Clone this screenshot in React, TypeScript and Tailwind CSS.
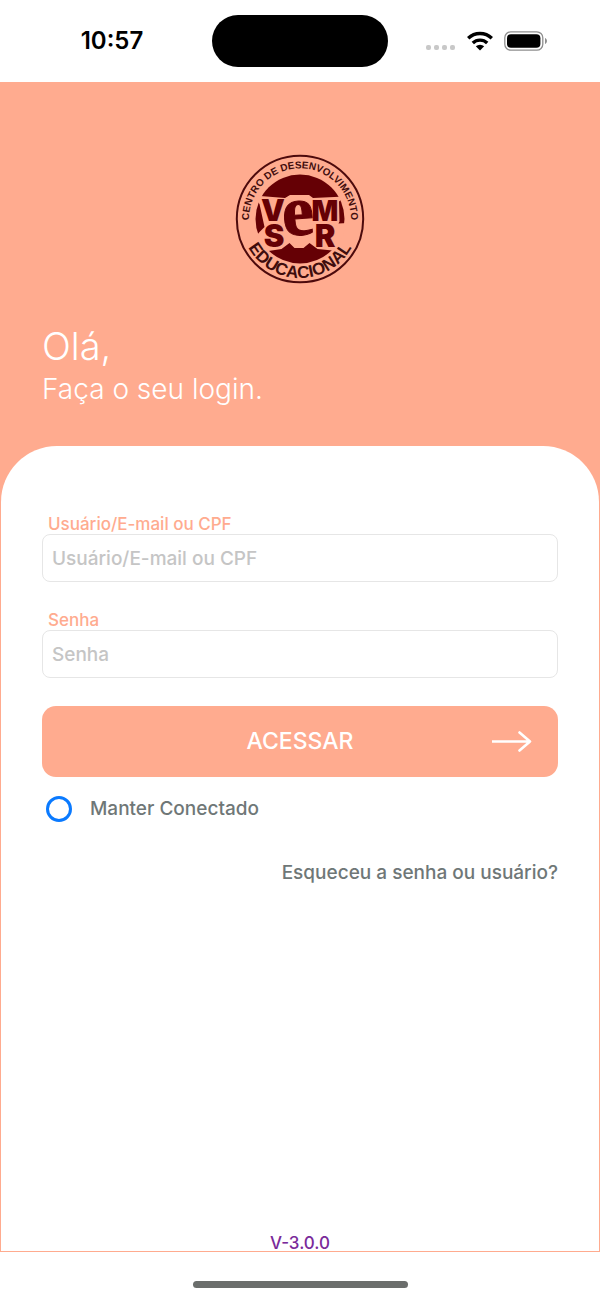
import React, { useState } from "react";

const Wifi: React.FC<{}> = () => (
  <svg width="28" height="20" viewBox="0 0 28 20" fill="none" aria-hidden="true">
    <path
      d="M2.2 7.2a17 17 0 0 1 23.6 0M6.8 12a10.4 10.4 0 0 1 14.4 0"
      stroke="#000"
      strokeWidth="3.4"
    />
    <path d="M14 19.6l-4.2-4.3a6.2 6.2 0 0 1 8.4 0z" fill="#000" />
  </svg>
);

const Battery: React.FC<{}> = () => (
  <svg width="44" height="20" viewBox="0 0 44 20" fill="none" aria-hidden="true">
    <rect x="0.8" y="0.8" width="38" height="18.4" rx="6" stroke="#8e8e8e" strokeWidth="1.3" />
    <rect x="3" y="3.2" width="33.4" height="13.6" rx="4" fill="#000" />
    <path d="M41 7v6c2.6-.8 2.6-5.2 0-6z" fill="#8e8e8e" />
  </svg>
);

const StatusBar: React.FC<{}> = () => (
  <div className="grid h-[82px] grid-cols-[1fr_176px_1fr] items-center bg-white">
    <span className="pl-3 text-center text-2xl font-semibold text-black">
      10:57
    </span>
    <div className="h-[52px] rounded-full bg-black" />
    <div className="flex items-center pl-[38px]">
      <div className="flex gap-[3px] pr-[11px] pt-3">
        {[0, 1, 2, 3].map((dot) => (
          <span key={dot} className="h-[5px] w-[5px] rounded-[2px] bg-[#c8c8c8]" />
        ))}
      </div>
      <Wifi />
      <div className="w-[10px]" />
      <Battery />
    </div>
  </div>
);

const Logo: React.FC<{}> = () => (
  <svg
    className="mx-auto"
    width="130"
    height="130"
    viewBox="0 0 130 130"
    role="img"
    aria-label="Vem Ser Educacional"
  >
    <defs>
      <path id="arc-top" d="M15.6 78A51 51 0 1 1 114.4 78" />
      <path id="arc-bottom" d="M6 65A59 59 0 0 0 124 65" />
    </defs>
    <circle cx="65" cy="65" r="63.2" fill="none" stroke="#4d0a0c" strokeWidth="2" />
    <circle cx="65" cy="65" r="44.5" fill="#650005" />
    <path
      d="M18 41.5l32 2.5 5-3h19l4 3 32-1.5-6 5 .5 20-1 2 9-.5-10 28-20-2-8-6-6 5-9 0-5-5-8 6-13 2-11 2 4-8-4-5-5 1 7-9 5-5-5-23z"
      fill="#ffab8f"
    />
    <g fill="#3f0d0d" fontFamily="Liberation Sans, sans-serif" fontWeight="700" textAnchor="middle">
      <text fontSize="10">
        <textPath href="#arc-top" startOffset="50%">
          CENTRO DE DESENVOLVIMENTO
        </textPath>
      </text>
      <text fontSize="17">
        <textPath href="#arc-bottom" startOffset="50%">
          EDUCACIONAL
        </textPath>
      </text>
    </g>
    <g
      fill="#650005"
      fontFamily="Inter, sans-serif"
      fontWeight="900"
      textAnchor="middle"
    >
      <text x="38" y="67" fontSize="30">V</text>
      <text x="90" y="67" fontSize="28">M</text>
      <text x="39" y="93" fontSize="31">S</text>
      <text x="90" y="93" fontSize="31">R</text>
      <text
        x="63"
        y="81"
        fontSize="72"
        fontFamily="Liberation Serif, serif"
        fontWeight="700"
        stroke="#650005"
        strokeWidth="1"
        transform="rotate(-4 63 65)"
      >
        e
      </text>
    </g>
  </svg>
);

const Field: React.FC<{ id: string; label: string; type: string }> = ({
  id,
  label,
  type,
}) => (
  <div>
    <label
      htmlFor={id}
      className="block pl-[6px] text-[17px] leading-5 font-medium text-[#ffab8f]"
    >
      {label}
    </label>
    <input
      id={id}
      type={type}
      placeholder={label}
      className="block h-12 w-full rounded-lg border border-[#e6e6e6] bg-white px-[9px] text-[19px] font-medium text-[#6f7777] placeholder:text-[#c5c5c5] focus:outline-none"
    />
  </div>
);

const App: React.FC<{}> = () => {
  const [keep, setKeep] = useState(false);
  return (
    <div className="flex min-h-screen flex-col bg-white font-['Inter',sans-serif]">
      <StatusBar />
      <main className="flex flex-1 flex-col bg-[#ffab8f]">
        <header className="px-[42px] pt-[72px] pb-[38px] text-white">
          <Logo />
          <h1 className="mt-[38px] text-[38px] leading-[48px] font-light">Olá,</h1>
          <p className="text-[28px] leading-[38px] font-light">Faça o seu login.</p>
        </header>
        <form
          className="mx-px mb-px flex flex-1 flex-col rounded-t-[56px] bg-white px-[41px] pt-[68px]"
          onSubmit={(e) => e.preventDefault()}
        >
          <div className="flex flex-col gap-7">
            <Field id="user" label="Usuário/E-mail ou CPF" type="text" />
            <Field id="password" label="Senha" type="password" />
            <button
              type="submit"
              className="grid h-[71px] grid-cols-[1fr_auto_1fr] items-center rounded-[14px] bg-[#ffab8f] px-[26px] text-[23px] font-medium text-white"
            >
              <span className="col-start-2">ACESSAR</span>
              <svg
                className="justify-self-end"
                width="40"
                height="22"
                viewBox="0 0 40 22"
                fill="none"
                stroke="currentColor"
                strokeWidth="2.6"
                strokeLinecap="round"
                strokeLinejoin="round"
                aria-hidden="true"
              >
                <path d="M.5 10.5h37.5M27.5 1.5L38 10.5l-10.5 9" />
              </svg>
            </button>
          </div>
          <label className="mt-[18px] flex items-center gap-[18px] pl-1 text-[19px] leading-7 font-medium text-[#6f7777]">
            <input
              type="checkbox"
              checked={keep}
              onChange={() => setKeep(!keep)}
              className="h-[26px] w-[26px] appearance-none rounded-full border-3 border-[#0a7aff] checked:bg-[#0a7aff]"
            />
            Manter Conectado
          </label>
          <a
            href="#"
            className="mt-9 self-end text-[19px] leading-7 font-medium text-[#6f7777]"
          >
            Esqueceu a senha ou usuário?
          </a>
          <p className="mt-auto text-center text-[17px] leading-4 font-medium text-[#7a2a9a]">
            V-3.0.0
          </p>
        </form>
      </main>
      <footer className="flex h-12 justify-center pt-[29px]">
        <div className="h-[7px] w-[215px] rounded-full bg-[#6b6e6c]" />
      </footer>
    </div>
  );
};

export default App;
